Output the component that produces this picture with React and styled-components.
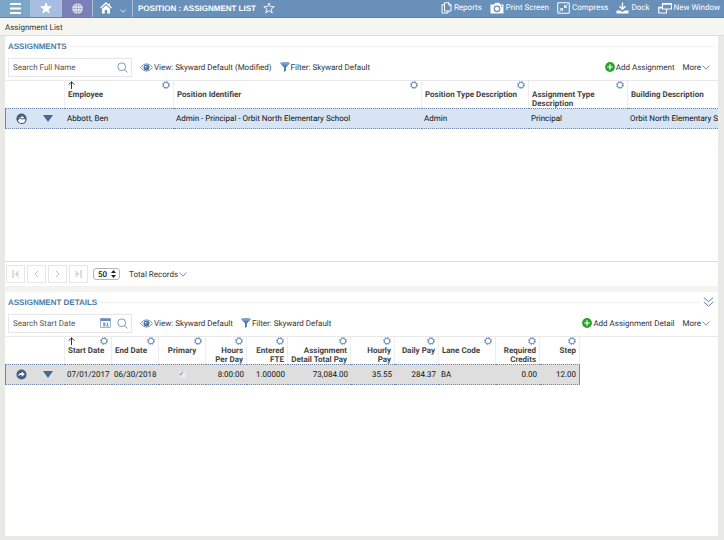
// App.jsx
// Position / Assignment List screen

import styled, { createGlobalStyle } from "styled-components";

const GlobalStyle = createGlobalStyle`
    * {
        box-sizing: border-box;
    }
    body {
        margin: 0;
        background-color: #e9eae5;
        color: #333;
        font-family: Roboto, "Liberation Sans", Arial, sans-serif;
        font-size: 8px;
        line-height: 9px;
        text-rendering: geometricPrecision;
    }
    button, input, select {
        font: inherit;
        color: inherit;
        text-rendering: inherit;
        margin: 0;
        padding: 0;
        border: 0;
        background: none;
    }
    svg {
        display: block;
        flex: none;
    }
`;

const Page = styled.div`
    display: flex;
    flex-direction: column;
    min-height: 100vh;
`;

/* top bar */
const TopBar = styled.header`
    display: flex;
    align-items: stretch;
    height: 18px;
    background-color: #6990b9;
    border-bottom: 1px solid #5c84b0;
    color: white;
`;

const TopButton = styled.button`
    display: flex;
    align-items: center;
    justify-content: center;
    gap: 8px;
    width: ${({ $wide }) => ($wide ? "40px" : "31px")};
    padding-bottom: 1px;
    background-color: ${({ $bg }) => $bg || "transparent"};
    border-right: 1px solid #a9c1da;
`;

const PageTitle = styled.h1`
    display: flex;
    align-items: center;
    gap: 7px;
    flex: 1;
    margin: 0;
    padding-left: 5px;
    padding-bottom: 1px;
    font-family: "Liberation Sans", Arial, sans-serif;
    font-size: 8px;
    font-weight: bold;
    white-space: nowrap;
`;

const TopActions = styled.nav`
    display: flex;
    align-items: center;
    gap: 8px;
    padding-right: 4px;
    padding-bottom: 2px;
`;

const TopAction = styled.button`
    display: flex;
    align-items: center;
    gap: 2px;
    white-space: nowrap;
`;

const Breadcrumb = styled.div`
    height: 18px;
    padding: 5px;
    background-color: #f5f6f2;
    border-bottom: 1px solid #dcddd9;
    color: #333;
`;

/* panels */
const Content = styled.main`
    display: flex;
    flex-direction: column;
    flex: 1;
    gap: 6px;
    margin: 0 6px 4px 5px;
    background-color: #f3f4ef;
`;

const Panel = styled.section`
    flex: ${({ $grow }) => ($grow ? "1" : "none")};
    background-color: white;
`;

const PanelHead = styled.div`
    display: flex;
    align-items: center;
    gap: 3px;
    height: 20px;
    padding: 0 4px 0 3px;
`;

const PanelTitle = styled.h2`
    margin: 0;
    color: #5179a6;
    font-family: "Liberation Sans", Arial, sans-serif;
    font-size: 8px;
    font-weight: bold;
`;

const Rule = styled.hr`
    flex: 1;
    margin: 0;
    border: 0;
    border-top: 1px solid #f0f0f0;
`;

const Toolbar = styled.div`
    display: flex;
    align-items: center;
    gap: 8px;
    height: 24px;
    padding: 0 8px 2px 3px;
`;

const SearchBox = styled.div`
    display: flex;
    align-items: center;
    gap: 6px;
    width: 124px;
    height: 19px;
    padding: 0 3px 0 4px;
    border: 1px solid #e6e6e6;

    input {
        flex: 1;
        min-width: 0;
        outline: none;
    }
    input::placeholder {
        color: #555;
        opacity: 1;
    }
`;

const ToolButton = styled.button`
    display: flex;
    align-items: center;
    gap: 1px;
    white-space: nowrap;
`;

const IconButton = styled.button`
    display: inline-flex;
    align-items: center;
    justify-content: center;
`;

const Spacer = styled.div`
    flex: 1;
`;

/* grids */
const GridArea = styled.div`
    overflow: hidden;
    min-height: ${({ $tall }) => ($tall ? "182px" : "0")};
    border-top: 1px solid #e8e8e8;
    border-bottom: ${({ $tall }) => ($tall ? "1px solid #dedede" : "0")};
`;

const Grid = styled.table`
    table-layout: fixed;
    width: ${({ $fill }) => ($fill ? "100%" : "0")};
    border-collapse: separate;
    border-spacing: 0;
`;

const Th = styled.th`
    height: 27px;
    padding: 0 3px;
    vertical-align: top;
    border-right: 1px solid #ededed;
    text-align: ${({ $align }) => $align || "left"};
    font-weight: bold;
    color: #444;

    &:last-child {
        border-right-color: ${({ $open }) => ($open ? "transparent" : "#ededed")};
    }
`;

const ThTools = styled.div`
    display: flex;
    align-items: flex-start;
    justify-content: space-between;
    height: 9px;
`;

const Row = styled.tr`
    background-color: ${({ $bg }) => $bg};

    td:first-child {
        border-left: 1px solid #7189ab;
    }
    td:last-child {
        border-right: ${({ $closed }) => ($closed ? "1px solid #7189ab" : "0")};
    }
`;

const Td = styled.td`
    height: 21px;
    padding: 0 3px 0 2px;
    overflow: hidden;
    white-space: nowrap;
    border-top: 1px dotted #6f86a8;
    border-bottom: 1px dotted #6f86a8;
    text-align: ${({ $align }) => $align || "left"};
    color: #111;
`;

const RowTools = styled.div`
    display: flex;
    align-items: center;
    gap: 16px;
    padding-left: 8px;
`;

const Check = styled.input`
    appearance: none;
    display: inline-block;
    width: 7px;
    height: 7px;
    vertical-align: middle;
    border-radius: 1px;
    background-color: #e9e9e9;

    &:checked::before {
        content: "✓";
        display: block;
        color: #777;
        font: bold 7px/7px "DejaVu Sans", sans-serif;
    }
`;

/* pager */
const Pager = styled.div`
    display: flex;
    align-items: center;
    gap: 2px;
    height: 24px;
    padding-left: 1px;
`;

const PageButton = styled.button`
    display: flex;
    align-items: center;
    justify-content: center;
    width: 19px;
    height: 18px;
    border: 1px solid #e6e6e6;
`;

const SizeBox = styled.div`
    display: flex;
    align-items: center;
    width: 27px;
    height: 12px;
    margin: 0 7px 0 3px;
    padding: 0 3px 0 4px;
    border: 1px solid #b5b5b5;
    border-radius: 3px;

    select {
        appearance: none;
        flex: 1;
        min-width: 0;
        color: #111;
        font-weight: 500;
        outline: none;
    }
`;

/* icons */
const GearIcon = () => (
    <svg width="8" height="8" viewBox="0 0 16 16" fill="none" stroke="#5d82b3">
        <circle cx="8" cy="8" r="5.5" strokeWidth="1.8" />
        <circle cx="8" cy="8" r="7" strokeWidth="1.8" strokeDasharray="2.75 2.75" />
    </svg>
);

const SortIcon = () => (
    <svg width="7" height="8" viewBox="0 0 7 8" fill="none" stroke="#333" strokeWidth="1">
        <path d="M3.5 8V.8M.6 3.7 3.5.8l2.9 2.9" />
    </svg>
);

const StarIcon = ({ size, filled }) => (
    <svg width={size} height={size} viewBox="0 0 24 24" fill={filled ? "white" : "none"} stroke="white" strokeWidth="1.8">
        <path d="m12 1.8 2.7 7.4 7.8.2-6.2 4.8 2.2 7.6-6.5-4.5-6.5 4.5 2.2-7.6L1.5 9.4l7.8-.2z" />
    </svg>
);

const MenuIcon = () => (
    <svg width="11" height="11" viewBox="0 0 11 11" fill="white">
        <path d="M0 0h11v2H0zM0 4.5h11v2H0zM0 9h11v2H0z" />
    </svg>
);

const GlobeIcon = () => (
    <svg width="11" height="11" viewBox="0 0 22 22">
        <circle cx="11" cy="11" r="10.5" fill="#eef0fa" />
        <g fill="none" stroke="#8c92c0" strokeWidth="1.2">
            <path d="M11 0v22M0 11h22M3 5.5h16M3 16.5h16" />
            <ellipse cx="11" cy="11" rx="5.5" ry="10.5" />
        </g>
    </svg>
);

const HomeIcon = () => (
    <svg width="12" height="12" viewBox="0 0 24 24">
        <path d="M1 12 12 2l11 10M18.5 3v5" fill="none" stroke="white" strokeWidth="2.6" />
        <path d="M4 13.5 12 6.5l8 7V23h-5.5v-7h-5v7H4z" fill="white" />
    </svg>
);

const ChevronIcon = ({ width = 8, color = "#6e8db5", low }) => (
    <svg width={width} height={low ? 12 : 5} viewBox={low ? "0 -8 8 13" : "0 0 8 5"} fill="none" stroke={color} strokeWidth="1">
        <path d="M.5.5 4 4.2 7.5.5" />
    </svg>
);

const DoubleChevronIcon = () => (
    <svg width="11" height="10" viewBox="0 0 11 10" fill="none" stroke="#5d7fae" strokeWidth="1">
        <path d="m.8.5 4.7 4.2L10.2.5M.8 5l4.7 4.2L10.2 5" />
    </svg>
);

const ReportsIcon = () => (
    <svg width="11" height="12" viewBox="0 0 22 24" fill="none" stroke="white" strokeWidth="2">
        <path d="M7 1.5h9l4 4V18H7zM15.5 2v4.5H20" />
        <path d="M7 5.5H2V22h12v-4" />
    </svg>
);

const CameraIcon = () => (
    <svg width="14" height="12" viewBox="0 0 28 24">
        <path d="M1 5h7l2.5-3.5h8L21 5h6v18H1z" fill="white" />
        <circle cx="14" cy="13.5" r="5.5" fill="none" stroke="#6990b9" strokeWidth="2.5" />
        <circle cx="23.5" cy="8.5" r="1.3" fill="#6990b9" />
    </svg>
);

const CompressIcon = () => (
    <svg width="13" height="12" viewBox="0 0 26 24" fill="none" stroke="white">
        <path d="M1.5 1.5h23v21h-23z" strokeWidth="2" />
        <path d="M21 5l-5 5M5 19l5-5" strokeWidth="2" />
        <path d="M14 5v6.5h7zM12 19v-6.5H5z" fill="white" strokeWidth="0" />
    </svg>
);

const DockIcon = () => (
    <svg width="13" height="12" viewBox="0 0 26 24">
        <path d="M13 1v12M7 8.5l6 6 6-6" fill="none" stroke="white" strokeWidth="2.6" />
        <path d="M1 17h7l5 3 5-3h7v6H1z" fill="white" />
    </svg>
);

const WindowIcon = () => (
    <svg width="14" height="12" viewBox="0 0 28 24" fill="none" stroke="white" strokeWidth="2.2">
        <path d="M9 3h18v11H9zM9 4.5h18" />
        <path d="M9 10.5H1.5V22H17v-8M1.5 12H9" />
    </svg>
);

const SearchIcon = () => (
    <svg width="11" height="11" viewBox="0 0 22 22" fill="none" stroke="#6a8cb8" strokeWidth="1.8">
        <circle cx="9.5" cy="9.5" r="7.8" />
        <path d="m15 15 6 6" />
    </svg>
);

const CalendarIcon = () => (
    <svg width="11" height="10" viewBox="0 0 22 20">
        <path d="M1 1h20v18H1z" fill="white" stroke="#7c9bc3" strokeWidth="1.5" />
        <path d="M1 1h20v5H1z" fill="#6a8cb8" />
        <path d="M6 10h4v6M6 13h4M6 16h4M13 10h2v6M12.5 16h5" fill="none" stroke="#4d74a5" strokeWidth="1.5" />
    </svg>
);

const EyeIcon = () => (
    <svg width="13" height="9" viewBox="0 0 26 18">
        <path d="M1 9Q13-6 25 9 13 24 1 9z" fill="white" stroke="#6a8cb8" strokeWidth="1.8" />
        <circle cx="13" cy="9" r="6" fill="#4f78ab" />
        <circle cx="11.5" cy="7.5" r="1.6" fill="white" />
    </svg>
);

const FilterIcon = () => (
    <svg width="10" height="10" viewBox="0 0 20 20">
        <path d="M.5 2.5 8 11v9l4-2.5V11l7.5-8.5z" fill="#5580b2" />
        <ellipse cx="10" cy="2.8" rx="9.5" ry="2.6" fill="#7d9fc8" />
    </svg>
);

const AddIcon = () => (
    <svg width="10" height="10" viewBox="0 0 20 20">
        <circle cx="10" cy="10" r="9.8" fill="#27a12b" />
        <path d="M10 4.5v11M4.5 10h11" stroke="white" strokeWidth="2.4" />
    </svg>
);

const OpenIcon = ({ pressed }) => (
    <svg width="11" height="11" viewBox="0 0 22 22">
        <circle cx="11" cy="11" r="10" fill="#3f5f86" />
        <path d="M4.500 14.500c0-5 3-6.500 7-6.500V5l6 5.500-6 5V12c-3.500 0-5.500.5-7 2.500z" fill="white" />
        {pressed && (
            <path
                d="M2 12l3 1 3-3 4 2 7-1 1 3-3 6-8 1.500-5-4z"
                fill="white"
                stroke="#222"
                strokeWidth="1.5"
            />
        )}
    </svg>
);

const TriangleIcon = () => (
    <svg width="10" height="7" viewBox="0 0 10 7" fill="#456a98">
        <path d="M0 0h10L5 7z" />
    </svg>
);

const UpDownIcon = () => (
    <svg width="5" height="8" viewBox="0 0 5 8" fill="#222">
        <path d="M0 3 2.5 0 5 3zM0 5h5L2.5 8z" />
    </svg>
);

const pagerIcons = [
    { label: "First page", d: "M1 0v8M6.5 1l-3 3 3 3M4 4h3" },
    { label: "Previous page", d: "M5 1 2 4l3 3" },
    { label: "Next page", d: "M2 1l3 3-3 3" },
    { label: "Last page", d: "M6 0v8M.5 1l3 3-3 3M0 4h3" },
];

/* data */
const assignmentColumns = [
    { label: "Employee", width: 109, value: "Abbott, Ben", sorted: true },
    { label: "Position Identifier", width: 248, value: "Admin - Principal - Orbit North Elementary School" },
    { label: "Position Type Description", width: 107, value: "Admin" },
    { label: "Assignment Type Description", width: 99, value: "Principal" },
    { label: "Building Description", value: "Orbit North Elementary School", noGear: true },
];

const detailColumns = [
    { label: "Start Date", width: 47, value: "07/01/2017", sorted: true },
    { label: "End Date", width: 47, value: "06/30/2018" },
    { label: "Primary", width: 47, align: "center", checked: true },
    { label: "Hours Per Day", width: 41, align: "right", value: "8:00:00" },
    { label: "Entered FTE", width: 41, align: "right", value: "1.00000" },
    { label: "Assignment Detail Total Pay", width: 63, align: "right", value: "73,084.00" },
    { label: "Hourly Pay", width: 44, align: "right", value: "35.55" },
    { label: "Daily Pay", width: 44, align: "right", value: "284.37" },
    { label: "Lane Code", width: 57, value: "BA" },
    { label: "Required Credits", width: 44, align: "right", value: "0.00" },
    { label: "Step", width: 40, align: "right", value: "12.00" },
];

const DataGrid = ({ columns, fill, rowColor, pressed }) => (
    <Grid $fill={fill}>
        <colgroup>
            <col width="60" />
            {columns.map((c) => <col key={c.label} width={c.width} />)}
        </colgroup>
        <thead>
            <tr>
                <Th aria-label="Row actions" />
                {columns.map((c) => (
                    <Th key={c.label} scope="col" $align={c.align} $open={fill}>
                        <ThTools>
                            <span>{c.sorted && <SortIcon />}</span>
                            {!c.noGear && <IconButton aria-label={`${c.label} options`}><GearIcon /></IconButton>}
                        </ThTools>
                        {c.label}
                    </Th>
                ))}
            </tr>
        </thead>
        <tbody>
            <Row $bg={rowColor} $closed={!fill}>
                <Td>
                    <RowTools>
                        <IconButton aria-label="Open record"><OpenIcon pressed={pressed} /></IconButton>
                        <IconButton aria-label="Expand row"><TriangleIcon /></IconButton>
                    </RowTools>
                </Td>
                {columns.map((c) => (
                    <Td key={c.label} $align={c.align}>
                        {c.checked ? <Check type="checkbox" aria-label={c.label} defaultChecked disabled /> : c.value}
                    </Td>
                ))}
            </Row>
        </tbody>
    </Grid>
);

const PanelToolbar = ({ search, withDate, view, addLabel }) => (
    <Toolbar>
        <SearchBox>
            <input type="text" placeholder={search} aria-label={search} />
            {withDate && <IconButton aria-label="Pick a date"><CalendarIcon /></IconButton>}
            <IconButton aria-label="Search"><SearchIcon /></IconButton>
        </SearchBox>
        <ToolButton><EyeIcon />View: {view}</ToolButton>
        <ToolButton><FilterIcon />Filter: Skyward Default</ToolButton>
        <Spacer />
        <ToolButton><AddIcon />{addLabel}</ToolButton>
        <ToolButton>More <ChevronIcon /></ToolButton>
    </Toolbar>
);

const App = () => {
    return (
        <Page>
            <GlobalStyle />
            <TopBar>
                <TopButton aria-label="Menu" $bg="#7ba6c8"><MenuIcon /></TopButton>
                <TopButton aria-label="Favorites" $bg="#a6bce0"><StarIcon size={12} filled /></TopButton>
                <TopButton aria-label="Districts" $bg="#7a7fb5"><GlobeIcon /></TopButton>
                <TopButton aria-label="Home" $wide>
                    <HomeIcon />
                    <ChevronIcon width={6} color="white" low />
                </TopButton>
                <PageTitle>
                    POSITION : ASSIGNMENT LIST
                    <IconButton aria-label="Add to favorites"><StarIcon size={12} /></IconButton>
                </PageTitle>
                <TopActions>
                    <TopAction><ReportsIcon />Reports</TopAction>
                    <TopAction><CameraIcon />Print Screen</TopAction>
                    <TopAction><CompressIcon />Compress</TopAction>
                    <TopAction><DockIcon />Dock</TopAction>
                    <TopAction><WindowIcon />New Window</TopAction>
                </TopActions>
            </TopBar>
            <Breadcrumb>Assignment List</Breadcrumb>

            <Content>
                <Panel>
                    <PanelHead>
                        <PanelTitle>ASSIGNMENTS</PanelTitle>
                        <Rule />
                    </PanelHead>
                    <PanelToolbar
                        search="Search Full Name"
                        view="Skyward Default (Modified)"
                        addLabel="Add Assignment"
                    />
                    <GridArea $tall>
                        <DataGrid columns={assignmentColumns} fill rowColor="#d7e4f3" pressed />
                    </GridArea>
                    <Pager>
                        {pagerIcons.map((p) => (
                            <PageButton key={p.label} aria-label={p.label}>
                                <svg width="7" height="8" viewBox="0 0 7 8" fill="none" stroke="#bdbdbd">
                                    <path d={p.d} />
                                </svg>
                            </PageButton>
                        ))}
                        <SizeBox>
                            <select aria-label="Records per page" defaultValue="50">
                                <option>25</option>
                                <option>50</option>
                                <option>100</option>
                            </select>
                            <UpDownIcon />
                        </SizeBox>
                        <ToolButton>Total Records <ChevronIcon /></ToolButton>
                    </Pager>
                </Panel>

                <Panel $grow>
                    <PanelHead>
                        <PanelTitle>ASSIGNMENT DETAILS</PanelTitle>
                        <Rule />
                        <IconButton aria-label="Collapse panel"><DoubleChevronIcon /></IconButton>
                    </PanelHead>
                    <PanelToolbar
                        search="Search Start Date"
                        withDate
                        view="Skyward Default"
                        addLabel="Add Assignment Detail"
                    />
                    <GridArea>
                        <DataGrid columns={detailColumns} rowColor="#dedede" />
                    </GridArea>
                </Panel>
            </Content>
        </Page>
    );
};

export default App;
